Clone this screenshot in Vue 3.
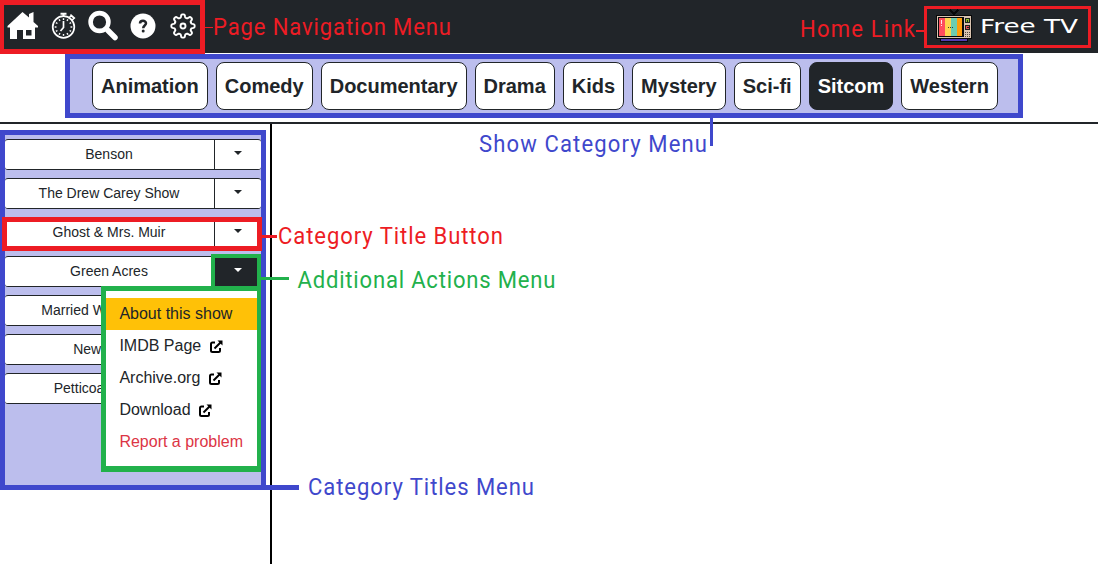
<script setup>
const categories = ['Animation', 'Comedy', 'Documentary', 'Drama', 'Kids', 'Mystery', 'Sci-fi', 'Sitcom', 'Western']
const shows = ['Benson', 'The Drew Carey Show', 'Ghost & Mrs. Muir', 'Green Acres', 'Married With Children', 'NewsRadio', 'Petticoat Junction']
const links = ['IMDB Page', 'Archive.org', 'Download']
const ticks = Array.from({ length: 12 }, (_, i) => i * 30)
const gearPoints = Array.from({ length: 144 }, (_, i) => {
  const a = (i * Math.PI) / 72
  const r = 10.1 + 1.6 * Math.tanh(2 * Math.cos(8 * a))
  return `${(13 + r * Math.cos(a)).toFixed(2)},${(13 + r * Math.sin(a)).toFixed(2)}`
}).join(' ')
const narrow = 0.92
const labels = [
  { text: 'Page Navigation Menu', x: 213, y: 35, w: 238, tone: 'red' },
  { text: 'Home Link', x: 800, y: 37, w: 115, tone: 'red' },
  { text: 'Show Category Menu', x: 479, y: 152, w: 228, tone: 'blue' },
  { text: 'Category Title Button', x: 278, y: 244, w: 225, tone: 'red' },
  { text: 'Additional Actions Menu', x: 297.5, y: 288, w: 258, tone: 'green' },
  { text: 'Category Titles Menu', x: 308, y: 495, w: 226, tone: 'blue' },
]
</script>

<template>
  <div class="page">
    <header class="topbar">
      <nav class="nav">
        <svg class="home" width="32" height="30" viewBox="0 0 32 30">
          <path fill="#fff" fill-rule="evenodd" d="M15.500 1 L22 6.500 V3 L26.500 1 V11 L31 15 V16.500 H28 V28 H16 V19 H10 V28 H3 V16.500 H0.500 V15 Z M19 19 V24.500 H24.500 V19 Z" />
        </svg>
        <svg class="watch" width="26" height="28" viewBox="0 0 26 28" fill="none" stroke="#fff">
          <circle cx="12.500" cy="16" r="10.800" stroke-width="1.700" />
          <path stroke-width="2" d="M9.500 2.800 H15.500 M12.500 2 V5" />
          <path stroke-width="1.500" d="M18 7 L20 4.500 L23 7.300 L21 9.300 M19.500 3.500 L24 7.500" />
          <path stroke-width="1.700" d="M12.500 10 V16.500 L9.500 20" />
          <path v-for="t in ticks" :key="t" stroke-width="1.400" d="M12.500 7.200 V9" :transform="`rotate(${t} 12.5 16)`" />
        </svg>
        <svg class="search" width="31" height="31" viewBox="0 0 31 31" fill="none" stroke="#fff">
          <circle cx="11.500" cy="12" r="8.900" stroke-width="4.600" />
          <path stroke-width="5.500" stroke-linecap="round" d="M20 20.500 L27 27.500" />
        </svg>
        <svg class="help" width="26" height="26" viewBox="0 0 26 26">
          <circle cx="13" cy="13" r="12.500" fill="#fff" />
          <path d="M10 10.600 C10 6.800 16 7 16 10.300 C16 12.600 13.200 12.400 13.200 15.200" fill="none" stroke="#212529" stroke-width="2.500" />
          <circle cx="13.200" cy="18" r="1.500" fill="#212529" />
        </svg>
        <svg class="gear" width="26" height="26" viewBox="0 0 26 26" fill="none" stroke="#fff" stroke-width="1.900" stroke-linejoin="round">
          <polygon :points="gearPoints" />
          <circle cx="13" cy="13" r="2.500" />
        </svg>
      </nav>
      <div class="brand">
        <svg width="36" height="34" viewBox="0 0 36 34" shape-rendering="crispEdges">
          <path d="M14 1 L18 5 L22 1" fill="none" stroke="#08090a" stroke-width="2" />
          <rect x="0" y="6" width="36" height="24" fill="#08090a" />
          <rect x="1" y="7" width="34" height="22" fill="#d9c3b0" />
          <rect x="2" y="8" width="26" height="20" fill="#08090a" />
          <rect x="3" y="9" width="6" height="18" fill="#ff4d5e" />
          <rect x="9" y="9" width="6" height="18" fill="#ffd44f" />
          <rect x="15" y="9" width="6" height="18" fill="#6ccdb0" />
          <rect x="21" y="9" width="5" height="18" fill="#ff9d0a" />
          <rect x="5" y="11" width="1" height="4" fill="#ffe7e7" />
          <rect x="5" y="16" width="1" height="1" fill="#ffe7e7" />
          <path d="M12 18.500 h1 m1 0 h1 m1 0 h1" stroke="#39412f" />
          <rect x="29" y="9" width="5" height="5" fill="#20231c" />
          <rect x="30" y="10" width="3" height="3" fill="#91c52d" />
          <rect x="31" y="11" width="1" height="2" fill="#20231c" />
          <rect x="29" y="16" width="5" height="5" fill="#20231c" />
          <rect x="30" y="17" width="3" height="3" fill="#e44b5b" />
          <rect x="31" y="18" width="2" height="1" fill="#20231c" />
          <path d="M29 23.500 h5 M29 25.500 h5 M29 27.500 h5" stroke="#51483f" stroke-dasharray="1 1" />
          <rect x="4" y="30" width="28" height="3" fill="#08090a" />
          <rect x="5" y="30" width="26" height="2" fill="#513db1" />
        </svg>
        <svg class="name" width="100" height="24"><text x="0" y="18" textLength="98" lengthAdjust="spacingAndGlyphs">Free TV</text></svg>
      </div>
    </header>

    <section class="categories">
      <div class="category-menu">
        <button v-for="c in categories" :key="c" :class="{ active: c === 'Sitcom' }">{{ c }}</button>
      </div>
    </section>

    <main class="content">
      <aside class="sidebar">
        <div class="titles">
          <div v-for="s in shows" :key="s" class="row">
            <button class="title">{{ s }}</button>
            <button class="toggle" :class="{ active: s === 'Green Acres' }"><i class="caret"></i></button>
          </div>
        </div>
      </aside>
    </main>

    <div class="menu">
      <div class="item current">About this show</div>
      <div v-for="l in links" :key="l" class="item">
        {{ l }}
        <svg width="13" height="13" viewBox="0 0 13 13" fill="none" stroke="#000" stroke-width="2">
          <path d="M5 2.500 H2.500 Q1 2.500 1 4 V10.500 Q1 12 2.500 12 H8.500 Q10 12 10 10.500 V8" />
          <path d="M4.500 8.500 L11 2" /><path d="M7.500 0.500 H12.500 V5.500 Z" fill="#000" stroke="none" />
        </svg>
      </div>
      <div class="item danger">Report a problem</div>
    </div>

    <svg class="annotations" width="1098" height="564" fill="none">
      <g class="red">
        <path class="fill" fill-rule="evenodd" d="M0 0 H205 V54 H0 Z M4 5 V49 H200 V5 Z" />
        <path class="fill" d="M205 27 h8 v1 h-8 Z M916 30 h8 v2 h-8 Z M262 235 h15 v3 h-15 Z" />
        <rect x="925.500" y="7.500" width="164" height="39" stroke-width="3" />
        <rect x="4.500" y="219.500" width="255" height="29" stroke-width="5" />
      </g>
      <g class="green">
        <rect x="213" y="256" width="46" height="32" stroke-width="4" />
        <path class="fill" fill-rule="evenodd" d="M101 286 H261 V472 H101 Z M106 291 V466 H257 V291 Z M261 277 h28 v3 h-28 Z" />
      </g>
      <path class="blue fill" d="M710 118 h3 v28 h-3 Z M266 485 h33 v5 h-33 Z" />
      <text v-for="l in labels" :key="l.text" :class="[l.tone, 'fill', 'label']" :transform="`translate(${l.x} ${l.y}) scale(${narrow} 1)`" :textLength="l.w / narrow">{{ l.text }}</text>
    </svg>
  </div>
</template>

<style scoped>
.page { position: relative; width: 1098px; height: 564px; overflow: hidden; background: #fff; color: #212529; font-family: "Liberation Sans", Arial, sans-serif; display: flex; flex-direction: column; }
button { font-family: inherit; color: inherit; margin: 0; }
.topbar { height: 53px; flex: none; background: #212529; display: flex; justify-content: space-between; align-items: flex-start; box-sizing: border-box; padding: 9px 18px 0 7px; }
.nav { display: flex; align-items: flex-start; }
.home { margin-top: 2px; }
.watch { margin: 2px 0 0 12px; }
.search { margin: 1px 0 0 11px; }
.help { margin: 4px 0 0 11px; }
.gear { margin: 4px 0 0 14px; }
.brand { display: flex; gap: 8px; }
.name { margin-top: 6px; }
.name text { font: 19px "DejaVu Sans", sans-serif; fill: #fff; }
.categories { height: 71px; flex: none; box-sizing: border-box; border-bottom: 2px solid #212529; padding: 1px 0 0 65px; }
.category-menu { box-sizing: border-box; width: 958px; height: 64px; border: 5px solid #3f48cc; background: #bcbeed; padding: 3px 0 0 22px; display: flex; align-items: flex-start; gap: 8px; }
.category-menu button { height: 48px; padding: 0 8px; border: 1px solid #212529; border-radius: 8px; background: #fff; font-size: 20px; font-weight: 700; white-space: nowrap; }
.category-menu .active { background: #212529; color: #fff; }
.content { flex: 1; display: flex; }
.sidebar { box-sizing: border-box; width: 272px; border-right: 2px solid #000; padding-top: 6px; }
.titles { box-sizing: border-box; width: 266px; height: 360px; border: 5px solid #3f48cc; background: #bcbeed; padding-top: 4px; display: flex; flex-direction: column; gap: 8px; }
.row { display: flex; height: 31px; flex: none; width: 256px; }
.row button { box-sizing: border-box; border: 1px solid #212529; border-width: 1px 0; background: #fff; padding: 0; }
.row .title { width: 209px; font-size: 14px; border-radius: 3px 0 0 3px; padding: 0 1px 2px 0; white-space: nowrap; }
.row .toggle { width: 47px; border-left-width: 1px; border-radius: 0 3px 3px 0; display: flex; justify-content: center; align-items: flex-start; padding-top: 12px; }
.row .active { background: #212529; color: #fff; }
.caret { border: 4px solid transparent; border-top-color: currentColor; border-bottom: 0; margin-top: -1px; }
.menu { position: absolute; left: 106px; top: 291px; width: 151px; height: 175px; box-sizing: border-box; padding-top: 7px; background: #fff; }
.item { height: 32px; line-height: 31px; padding-left: 13.4px; font-size: 16px; white-space: nowrap; }
.item svg { margin-left: 4px; vertical-align: -2px; }
.current { background: #ffc107; }
.danger { color: #dc3545; }
.annotations { position: absolute; left: 0; top: 0; pointer-events: none; }
.red { color: #ed1c24; stroke: currentColor; }
.green { color: #22b14c; stroke: currentColor; }
.blue { color: #3f48cc; }
.fill { fill: currentColor; stroke: none; }
.label { font: 24px Roboto, sans-serif; }
</style>
